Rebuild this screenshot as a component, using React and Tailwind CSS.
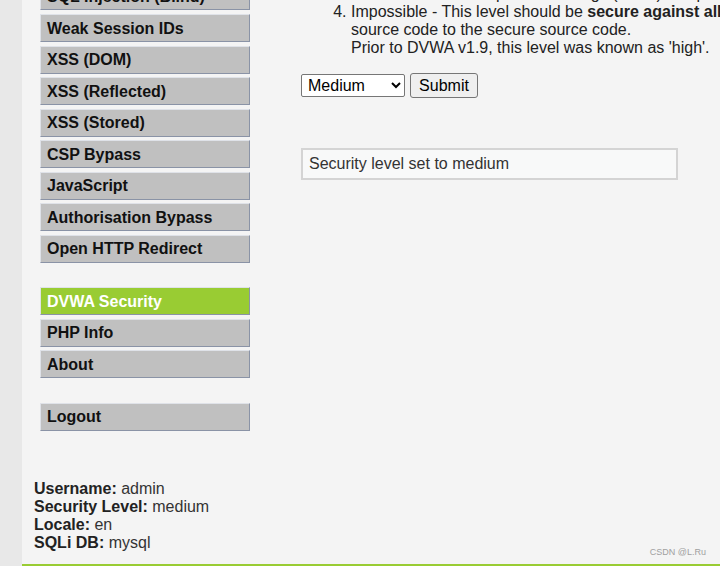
import React from "react";

const groups = [
  [
    "SQL Injection (Blind)",
    "Weak Session IDs",
    "XSS (DOM)",
    "XSS (Reflected)",
    "XSS (Stored)",
    "CSP Bypass",
    "JavaScript",
    "Authorisation Bypass",
    "Open HTTP Redirect",
  ],
  ["DVWA Security", "PHP Info", "About"],
  ["Logout"],
];

const MenuItem = ({ label, active }) => (
  <li
    className={`flex items-center h-[28px] mb-[3.57px] pl-[6px] pt-[1px] font-bold border border-t-[#dfe2e8] border-l-[#dfe2e8] border-b-[#8a93a6] border-r-[#8a93a6] ${
      active ? "bg-[#99cc33] text-white border-t-[#aab4c6]" : "bg-[#c0c0c0] text-[#111]"
    }`}
  >
    {label}
  </li>
);

const App = () => {
  return (
    <div
      className="w-[720px] h-[566px] overflow-hidden flex text-[16px] leading-[18px]"
      style={{ fontFamily: '"Liberation Sans", Arial, sans-serif' }}
    >
      <div className="w-[22px] h-full bg-[#e8e8e8] shrink-0" />

      <div className="relative flex-1 min-w-0 h-full flex bg-[#f4f4f4] border-b-2 border-[#99cc33]">
        <div className="w-[279px] shrink-0 flex flex-col">
          <div className="pl-[18px] mt-[-17.57px]">
            {groups.map((g, gi) => (
              <ul key={gi} className="w-[210px] mb-[24.4px]">
                {g.map((label) => (
                  <MenuItem
                    key={label}
                    label={label}
                    active={label === "DVWA Security"}
                  />
                ))}
              </ul>
            ))}
          </div>

          <div className="pl-[12px] mt-[24.9px] text-[#222]">
            <div>
              <b>Username:</b> <span className="text-[#333]">admin</span>
            </div>
            <div>
              <b>Security Level:</b> <span className="text-[#333]">medium</span>
            </div>
            <div>
              <b>Locale:</b> <span className="text-[#333]">en</span>
            </div>
            <div>
              <b>SQLi DB:</b> <span className="text-[#333]">mysql</span>
            </div>
          </div>
        </div>

        <div className="flex-1 min-w-0 text-[#222]">
          <ol start={3} className="list-decimal pl-[50px] mt-[-14.8px] whitespace-nowrap">
            <li>similar to various Capture The Flags (CTFs) competitions, and bypass (alike).</li>
            <li>
              Impossible - This level should be <b>secure against all vulnerabilities</b>. It is used to compare the vulnerable
              <br />
              source code to the secure source code.
              <br />
              Prior to DVWA v1.9, this level was known as 'high'.
            </li>
          </ol>

          <form className="flex items-center gap-[5px] mt-[16px]" onSubmit={(e) => e.preventDefault()}>
            <select
              defaultValue="medium"
              className="w-[104px] h-[23px] bg-white border border-[#767676] rounded-[2px] pl-[2px] text-black"
            >
              <option value="low">Low</option>
              <option value="medium">Medium</option>
              <option value="high">High</option>
              <option value="impossible">Impossible</option>
            </select>
            <button
              type="submit"
              className="h-[25px] w-[68px] bg-[#efefef] border border-[#767676] rounded-[3px] text-black"
            >
              Submit
            </button>
          </form>

          <div className="mt-[50px] w-[377px] h-[32px] flex items-center pl-[6px] bg-[#f8f9f9] border-2 border-[#d4d4d4] text-[#333]">
            Security level set to medium
          </div>
        </div>

        <div className="absolute right-[14px] bottom-[6px] text-[9px] leading-[12px] text-[#a0a0a0]">
          CSDN @L.Ru
        </div>
      </div>
    </div>
  );
};

export default App;
